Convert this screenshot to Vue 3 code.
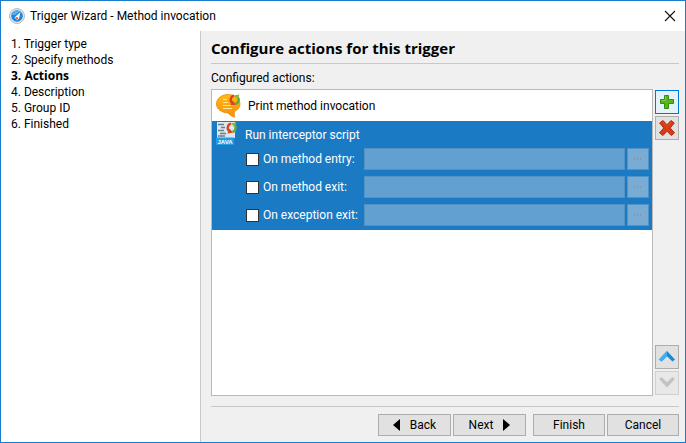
<script setup>
import { ref } from 'vue'

const steps = ['Trigger type', 'Specify methods', 'Actions', 'Description', 'Group ID', 'Finished']
const current = 2
const hooks = ref([
  { id: 'entry', label: 'On method entry:', on: false, script: '' },
  { id: 'exit', label: 'On method exit:', on: false, script: '' },
  { id: 'exception', label: 'On exception exit:', on: false, script: '' },
])
</script>

<template>
  <div class="window">
    <header class="titlebar">
      <svg class="logo" viewBox="0 0 16 16">
        <circle cx="8" cy="8" r="7.5" fill="#e4e4e4" stroke="#bcbcbc" stroke-width="1" />
        <circle cx="8" cy="8" r="5.8" fill="#1687e8" />
        <path d="M3 7a5.200 5.200 0 0 1 8-3.500L6 7z" fill="#55b0f6" />
        <path d="M11.500 4 10 10.500 8 12.200 5.500 9.500z" fill="#fff" />
        <circle cx="7.800" cy="10.300" r="1.300" fill="#f05a28" />
      </svg>
      <span class="caption">Trigger Wizard - Method invocation</span>
      <button class="close" aria-label="Close">
        <svg viewBox="0 0 12 12"><path d="M1 1l10 10M11 1 1 11" stroke="#111" stroke-width="1.1" /></svg>
      </button>
    </header>

    <div class="body">
      <nav class="steps">
        <ol>
          <li v-for="(step, i) in steps" :key="step" :class="{ current: i === current }">{{ i + 1 }}. {{ step }}</li>
        </ol>
      </nav>

      <main class="page">
        <h1>Configure actions for this trigger</h1>
        <p class="label">Configured actions:</p>

        <div class="editor">
          <ul class="list">
            <li class="item">
              <svg class="bubble" viewBox="0 0 25 25">
                <defs>
                  <linearGradient id="amber" x1="0" y1="0" x2="0" y2="1">
                    <stop offset="0" stop-color="#ffba19" />
                    <stop offset="1" stop-color="#f78f0c" />
                  </linearGradient>
                  <g id="cycle">
                    <path d="M5 1.700A4.200 4.200 0 0 0 3.200 9" fill="none" stroke="#dc431f" stroke-width="2.400" />
                    <path d="M1.500 11.500 3.500 6.800 7.200 10.500z" fill="#dc431f" />
                    <path d="M6.500 10A4.200 4.200 0 0 0 8.500 3" fill="none" stroke="#5cab3a" stroke-width="2.400" />
                    <path d="M10.500.5 8.500 5.200 5 1.200z" fill="#7fbd3c" />
                  </g>
                </defs>
                <path d="M12 1.500C5.500 1.500.5 5.600.5 11S5.500 19.500 12 20c1.500 1.500 3 3 6.500 4.200-.3-2-.4-4 .3-6 3.500-1.600 5.200-4 5.200-7.200 0-5.400-5.500-9.500-12-9.500z" fill="url(#amber)" stroke="#e98a0b" stroke-width=".8" />
                <path d="M7 6.500h4M7 9.500h5M7 12.500h10M7 15.500h9" stroke="#ffe3a0" stroke-width="1.200" />
                <use href="#cycle" x="13" y="1" />
              </svg>
              <span>Print method invocation</span>
            </li>
            <li class="item selected">
              <svg class="script" viewBox="0 0 22 24">
                <path d="M1 0h18v16H1z" fill="#dce8ef" />
                <path d="M2 2.500h6M5 5.500h4M2 8.500h6M4 11.500h6M2 14h7" stroke="#667d8b" stroke-width="1.300" />
                <path d="M0 15.500h18V23H0z" fill="#219ce3" />
                <text x="9" y="21.500" text-anchor="middle" class="tag">JAVA</text>
                <use href="#cycle" x="10" y="0" />
              </svg>
              <div class="details">
                <span class="name">Run interceptor script</span>
                <div class="hooks">
                  <template v-for="hook in hooks" :key="hook.id">
                    <label class="check" :for="hook.id">
                      <input :id="hook.id" v-model="hook.on" type="checkbox" />
                      <span>{{ hook.label }}</span>
                    </label>
                    <input v-model="hook.script" class="field" type="text" :aria-label="hook.label" :disabled="!hook.on" />
                    <button class="browse" aria-label="Edit script" :disabled="!hook.on">
                      <svg viewBox="0 0 8 2"><path d="M0 0h1v2H0zM3 0h1v2H3zM6 0h1v2H6z" /></svg>
                    </button>
                  </template>
                </div>
              </div>
            </li>
          </ul>

          <div class="tools">
            <button class="tool focused" aria-label="Add">
              <svg viewBox="0 0 16 16">
                <path d="M5.500 1.500h4v4h5v4h-5v5h-4v-5h-4v-4h4z" fill="#56b51d" stroke="#388e0c" />
                <path d="M6.500 2.500v4h-4" fill="none" stroke="#83cc49" />
              </svg>
            </button>
            <button class="tool" aria-label="Remove">
              <svg viewBox="0 0 16 16">
                <path d="M4 .5 8 4.800 12 .5l3.300 2.500L11.200 8l4.300 4.800-3.200 2.700L8 11.200l-4 4.300-3.500-2.700L4.800 8 .7 3z" fill="#d83b16" stroke="#ad2b0c" />
                <path d="m3.800 2 4.200 4.500L12.200 2" fill="none" stroke="#e0532d" />
              </svg>
            </button>
            <span class="spring"></span>
            <button class="tool" aria-label="Move up">
              <svg viewBox="0 0 16 16">
                <path d="M0 10.500 8 2l8 8.500-2.500 2L8 7.200l-5.500 5.300z" fill="#118bd8" />
                <path d="M0 10.500 8 2v5.200l-5.500 5.300z" fill="#45aef0" />
              </svg>
            </button>
            <button class="tool" aria-label="Move down" disabled>
              <svg viewBox="0 0 16 16"><path d="M0 4 8 12.500 16 4l-2.500-2L8 7.300 2.500 2z" fill="#c3c3c3" /></svg>
            </button>
          </div>
        </div>

        <footer class="actions">
          <button class="push step">
            <svg viewBox="0 0 7 12"><path d="M7 0v12L0 6z" /></svg><span>Back</span>
          </button>
          <button class="push step">
            <span>Next</span><svg viewBox="0 0 7 12"><path d="M0 0v12l7-6z" /></svg>
          </button>
          <button class="push finish">Finish</button>
          <button class="push">Cancel</button>
        </footer>
      </main>
    </div>
  </div>
</template>

<style>
body {
  margin: 0;
}
</style>

<style scoped>
* {
  box-sizing: border-box;
}

.window {
  display: flex;
  flex-direction: column;
  min-height: 100vh;
  border: 1px solid #1a7dcc;
  background: #fff;
  color: #000;
  font: 12px/16px Roboto, "Open Sans", sans-serif;
}

button,
input {
  margin: 0;
  padding: 0;
  font: inherit;
  color: inherit;
}

svg {
  display: block;
  flex: none;
}

.titlebar {
  display: flex;
  align-items: center;
  height: 30px;
  padding: 0 9px 0 8px;
}

.logo {
  width: 16px;
  height: 16px;
}

.caption {
  flex: 1;
  padding-left: 5px;
}

.close {
  border: 0;
  background: none;
}

.close svg {
  width: 12px;
  height: 12px;
}

.body {
  display: flex;
  flex: 1;
}

.steps {
  flex: 0 0 200px;
  padding: 5px 10px;
  border-right: 1px solid #c8c8c8;
}

ol,
ul {
  margin: 0;
  padding: 0;
  list-style: none;
}

.current,
h1 {
  font-family: "Open Sans", sans-serif;
  font-weight: 700;
}

.page {
  display: flex;
  flex: 1;
  flex-direction: column;
  min-width: 0;
  padding: 0 6px 6px 10px;
  background: #f0f0f0;
}

h1 {
  margin: 0;
  padding: 7px 0 5px;
  border-bottom: 1px solid #c8c8c8;
  font-size: 15px;
  line-height: 20px;
}

.label {
  margin: 0;
  padding: 6px 0 3px;
}

.editor {
  display: flex;
  flex: 1;
  gap: 2px;
}

.list {
  flex: 1;
  min-width: 0;
  border: 1px solid #b9b9b9;
  background: #fff;
}

.item {
  display: flex;
  align-items: center;
  min-height: 31px;
  padding-left: 4px;
}

.bubble {
  width: 25px;
  height: 25px;
  margin-right: 7px;
}

.selected {
  align-items: flex-start;
  background: #1a7bc4;
  color: #fff;
}

.script {
  width: 22px;
  height: 24px;
  margin: 1px 7px 0 0;
}

.tag {
  fill: #fff;
  font: 700 6px "Liberation Sans", sans-serif;
}

.details {
  flex: 1;
  min-width: 0;
  padding: 6px 3px 4px 0;
}

.name {
  display: block;
}

.hooks {
  display: grid;
  grid-template-columns: 117px 1fr 22px;
  gap: 6px 2px;
  padding-top: 5px;
}

.check {
  display: flex;
  align-items: center;
  gap: 4px;
  padding-left: 1px;
  white-space: nowrap;
}

.check input {
  appearance: none;
  flex: none;
  width: 13px;
  height: 13px;
  border: 1px solid #333;
  background: #fff;
}

.check input:checked {
  background: #333;
  box-shadow: inset 0 0 0 2px #fff;
}

.field,
.browse {
  width: 100%;
  min-width: 0;
  height: 22px;
  border: 1px solid #5392c3;
  background: #61a0d0;
}

.field {
  border-radius: 0;
}

.browse {
  display: flex;
  align-items: center;
  justify-content: center;
  background: #79acd4;
}

.browse svg {
  width: 8px;
  height: 2px;
  fill: #9a8f98;
}

.tools {
  display: flex;
  flex-direction: column;
  gap: 2px;
  padding: 1px 0;
}

.spring {
  flex: 1;
}

.tool,
.push {
  display: flex;
  align-items: center;
  justify-content: center;
  border: 1px solid #adadad;
  background: #e1e1e1;
}

.tool {
  width: 24px;
  height: 24px;
}

.tool svg {
  width: 16px;
  height: 16px;
}

.tool:disabled {
  border-color: #cfcfcf;
  background: #e8e8e8;
}

.focused {
  border-color: #0078d7;
  background: #e5f1fb;
}

.actions {
  display: flex;
  justify-content: flex-end;
  gap: 2px;
  margin-top: 10px;
  padding: 7px 0 0;
  border-top: 1px solid #c8c8c8;
}

.push {
  width: 72px;
  height: 22px;
  gap: 10px;
}

.step {
  width: 73px;
}

.push svg {
  width: 7px;
  height: 12px;
}

.finish {
  margin-left: 5px;
}
</style>
